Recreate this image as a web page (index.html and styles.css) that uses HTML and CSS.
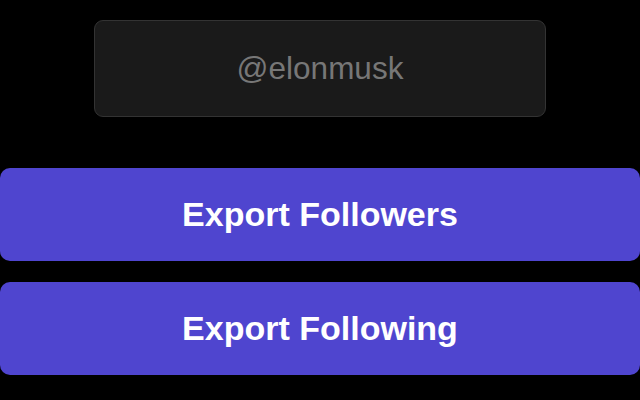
FILE: index.html
```html
<!DOCTYPE html>
<html>
<head>
<meta charset="utf-8">
<link rel="stylesheet" href="styles.css">
</head>
<body>
<div class="panel">
  <input class="handle" type="text" placeholder="@elonmusk">
  <div class="actions">
    <button class="btn">Export Followers</button>
    <button class="btn">Export Following</button>
  </div>
</div>
</body>
</html>
```
FILE: styles.css
```css
html, body {
  margin: 0;
  padding: 0;
  background: #000;
  font-family: "Liberation Sans", Arial, sans-serif;
}
.panel {
  display: flex;
  flex-direction: column;
  align-items: center;
  padding-top: 20px;
}
.handle {
  box-sizing: border-box;
  width: 452px;
  height: 97px;
  background: #1a1a1a;
  border: 1px solid #333;
  border-radius: 9px;
  color: #ddd;
  font-family: "Liberation Sans", Arial, sans-serif;
  font-size: 31.5px;
  text-align: center;
  outline: none;
  padding: 0;
}
.handle::placeholder {
  color: #777;
}
.actions {
  align-self: stretch;
  display: flex;
  flex-direction: column;
  gap: 21px;
  margin-top: 51px;
}
.btn {
  height: 93px;
  border: none;
  border-radius: 10px;
  background: #4f45cf;
  color: #fff;
  font-family: "Liberation Sans", Arial, sans-serif;
  font-weight: bold;
  font-size: 34px;
  padding: 0;
}
```
